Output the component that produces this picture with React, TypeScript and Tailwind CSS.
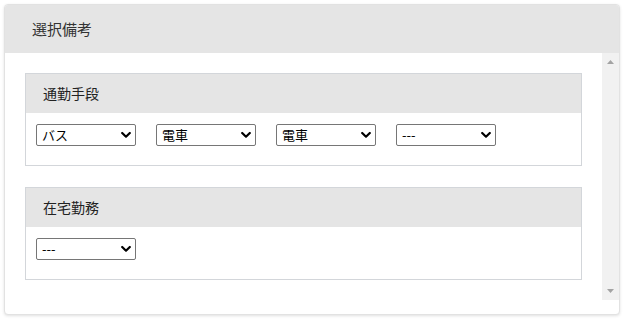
const font = { fontFamily: '"Noto Sans CJK JP", "Noto Sans", sans-serif' };

function Chevron() {
  return (
    <svg className="pointer-events-none absolute right-[5px] top-1/2 -translate-y-1/2" width="10" height="7" viewBox="0 0 10 7">
      <path d="M1.2 1.5 L5 5.2 L8.8 1.5" fill="none" stroke="#000" strokeWidth="2.2" strokeLinecap="round" strokeLinejoin="round" />
    </svg>
  );
}

function Select({ value, options }: { value: string; options: string[] }) {
  return (
    <div className="relative w-[100px] h-[22px]">
      <select
        defaultValue={value}
        className="block appearance-none w-full h-full border border-[#767676] rounded-[2px] bg-white pl-[5px] pr-[18px] text-[13px] leading-[20px] text-black outline-none"
      >
        {options.map((o) => (
          <option key={o} value={o}>
            {o}
          </option>
        ))}
      </select>
      <Chevron />
    </div>
  );
}

const transport = ['---', 'バス', '電車', '徒歩', '自転車'];
const remote = ['---', 'あり', 'なし'];

function Panel({ title, children }: { title: string; children: React.ReactNode }) {
  return (
    <div className="border border-[#d3d6da] bg-white">
      <div className="h-[39px] bg-[#e5e5e5] flex items-center px-[17px] text-[14px] text-[#222]">{title}</div>
      <div className="h-[52px] pt-[11px] px-[10px] flex items-start gap-[20px]">{children}</div>
    </div>
  );
}

export default function App() {
  return (
    <div className="bg-white p-[4px] min-h-[321px]" style={font}>
      <div className="w-[616px] h-[311px] rounded-[4px] border border-[#e2e2e2] shadow-[0_1px_3px_rgba(0,0,0,0.12)] overflow-hidden flex flex-col bg-white">
        <div className="h-[48px] shrink-0 bg-[#e5e5e5] flex items-center px-[27px] text-[15px] text-[#333]">選択備考</div>
        <div className="flex">
          <div className="flex-1 pt-[20px] px-[20px] flex flex-col gap-[21px]">
            <Panel title="通勤手段">
              <Select value="バス" options={transport} />
              <Select value="電車" options={transport} />
              <Select value="電車" options={transport} />
              <Select value="---" options={transport} />
            </Panel>
            <Panel title="在宅勤務">
              <Select value="---" options={remote} />
            </Panel>
          </div>
          <div className="w-[17px] h-[247px] bg-[#f1f1f1] flex flex-col items-center justify-between py-[7px]">
            <svg width="7" height="4" viewBox="0 0 7 4">
              <path d="M0 4 L3.5 0 L7 4 Z" fill="#a3a3a3" />
            </svg>
            <svg width="7" height="4" viewBox="0 0 7 4">
              <path d="M0 0 L3.5 4 L7 0 Z" fill="#a3a3a3" />
            </svg>
          </div>
        </div>
      </div>
    </div>
  );
}
